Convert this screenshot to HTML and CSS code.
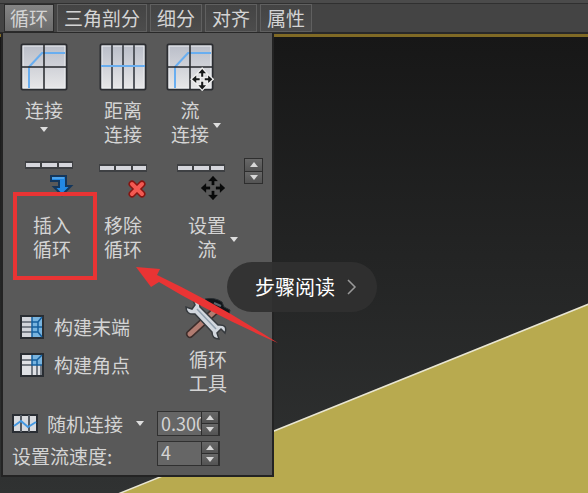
FILE: index.html
```html
<!DOCTYPE html>
<html lang="zh-CN">
<head>
<meta charset="utf-8">
<title>循环</title>
<link rel="stylesheet" href="styles.css">
</head>
<body>
<svg class="scene" viewBox="0 0 588 493" preserveAspectRatio="none" aria-hidden="true">
  <path d="M118 494 274 431 589 304V494z" fill="#b8aa4f"/>
  <path d="M118 494 274 431 589 304" fill="none" stroke="#e9e6d2" stroke-width="1.5"/>
</svg>
<nav class="tabs">
  <button class="tab active">循环</button>
  <button class="tab">三角剖分</button>
  <button class="tab">细分</button>
  <button class="tab">对齐</button>
  <button class="tab">属性</button>
</nav>
<main class="panel">
  <section class="row first">
    <button class="tool wide">
      <svg width="48" height="48" viewBox="0 0 48 48">
        <defs>
          <linearGradient id="tile" x2="0" y2="1"><stop stop-color="#b9bdc8"/><stop offset="1" stop-color="#e8e8e9"/></linearGradient>
          <g id="mesh"><rect x="1.500" y="1.500" width="45" height="45" rx="1" fill="url(#tile)" stroke="#2c2e32" stroke-width="2"/>
          <rect x="3" y="3" width="42" height="42" fill="none" stroke="#eef0f3" stroke-width="1"/>
          <path d="M9 45V24L22 10H45" fill="none" stroke="#69aef0" stroke-width="2"/>
          <path d="M24 2V46M2 24H46" stroke="#25272b" stroke-width="1.500"/></g>
          <g id="move"><path d="M12 0 16.500 5H13.200V9H10.800V5H7.500zM12 24 7.500 19H10.800V15H13.200V19H16.500zM0 12 5 7.500V10.800H9V13.200H5V16.500zM24 12 19 16.500V13.200H15V10.800H19V7.500z"/></g>
          <g id="bars"><path d="M0 0H48V8H0z" fill="#3e4043"/><path d="M1 2H15V6H1zM17 2H32V6H17zM34 2H47V6H34z" fill="#d5d6dc"/></g>
        </defs>
        <use href="#mesh"/>
      </svg>
      <span class="label">连接</span>
      <i class="caret"></i>
    </button>
    <button class="tool">
      <svg width="48" height="48" viewBox="0 0 48 48">
        <rect x="1.500" y="1.500" width="45" height="45" rx="1" fill="url(#tile)" stroke="#2c2e32" stroke-width="2"/>
        <rect x="3" y="3" width="42" height="42" fill="none" stroke="#eef0f3"/>
        <path d="M13 2V46M24 2V46M35 2V46" stroke="#555960" stroke-width="2"/>
        <path d="M2 23H46" stroke="#69aef0" stroke-width="2"/>
      </svg>
      <span class="label">距离<br>连接</span>
    </button>
    <button class="tool narrow">
      <svg width="48" height="48" viewBox="0 0 48 48">
        <use href="#mesh"/>
        <use href="#move" transform="translate(26 26) scale(.85)" stroke="#eee" stroke-width="3"/>
        <use href="#move" transform="translate(26 26) scale(.85)" fill="#17191a"/>
      </svg>
      <span class="label">流<br>连接</span>
    </button>
    <i class="caret side"></i>
  </section>

  <section class="row second">
    <button class="tool insert">
      <svg width="54" height="44" viewBox="0 0 54 44">
        <use href="#bars" y="4"/>
        <path d="M26 19H41V29H46L37 38 29 30H34V24H26z" fill="#2389e4" stroke="#14375c" stroke-width="2"/>
        <path d="M27 21H39" stroke="#75bdf5"/>
      </svg>
      <span class="label">插入<br>循环</span>
    </button>
    <button class="tool remove">
      <svg width="48" height="44" viewBox="0 0 48 44">
        <use href="#bars" y="7"/>
        <path d="M33 27 43 37M43 27 33 37" stroke="#871511" stroke-width="7" stroke-linecap="round"/>
        <path d="M33 27 43 37M43 27 33 37" stroke="#f35952" stroke-width="4" stroke-linecap="round"/>
      </svg>
      <span class="label">移除<br>循环</span>
    </button>
    <button class="tool flow">
      <svg width="60" height="44" viewBox="0 0 60 44">
        <use href="#bars" y="7"/>
        <use href="#move" transform="translate(24 19)" fill="#090a0a" stroke="#090a0a" stroke-width=".3"/>
      </svg>
      <span class="label">设置<br>流</span>
    </button>
    <i class="caret side"></i>
    <div class="spin">
      <button class="step" aria-label="增加流"><i class="up"></i></button>
      <button class="step" aria-label="减少流"><i class="down"></i></button>
    </div>
  </section>

  <section class="row third">
    <div class="builds">
      <button class="build">
        <svg width="24" height="24" viewBox="0 0 24 24">
          <rect x="1" y="1" width="22" height="22" fill="#d3d6dc" stroke="#292d32" stroke-width="2"/>
          <path d="M12 2H22V22H12z" fill="#78b4df"/>
          <path d="M2 7H12M2 12H12M2 17H12" stroke="#5d646d" stroke-width="1.500"/>
          <path d="M12 2V22M12 7H18V17H12M12 12H22M18 7 22 2M18 17 22 22" fill="none" stroke="#155f9f" stroke-width="1.500"/>
        </svg>
        <span>构建末端</span>
      </button>
      <button class="build">
        <svg width="24" height="24" viewBox="0 0 24 24">
          <rect x="1" y="1" width="22" height="22" fill="#dfe1e5" stroke="#292d32" stroke-width="2"/>
          <path d="M12 2H22V12H12z" fill="#78b4df"/>
          <path d="M2 7H12M2 12H12M12 12V22M17 12V22M21 12V22" stroke="#535a63" stroke-width="1.500"/>
          <path d="M12 2V12H22M12 7H17V12M17 7 22 2" fill="none" stroke="#155f9f" stroke-width="1.500"/>
        </svg>
        <span>构建角点</span>
      </button>
    </div>
    <button class="tool kit">
      <svg width="48" height="48" viewBox="0 0 48 48">
        <path d="M6 37 31 14" stroke="#3c2d2b" stroke-width="8" stroke-linecap="round"/>
        <path d="M6 37 31 14" stroke="#b17c71" stroke-width="5" stroke-linecap="round"/>
        <path d="M21 2Q31 0 38 5L40 10 46 13 45 18 40 17 31 14 28 9z" fill="#111519" stroke="#292e32" stroke-width="1"/>
        <path d="M30 6 37 9" stroke="#59646d" stroke-width="2"/>
        <path d="M9 3 11 8 8 12 2 10Q2 18 11 17L28 35Q28 42 35 42L33 36 37 32 41 36Q44 27 34 28L16 10Q16 3 9 3z" fill="#d2d7de" stroke="#363a3e" stroke-width="1.500"/>
        <path d="M13 12 32 32" stroke="#91a0ae" stroke-width="1.500"/>
      </svg>
      <span class="label">循环<br>工具</span>
    </button>
  </section>

  <section class="settings">
    <button class="random">
      <svg width="26" height="19" viewBox="0 0 26 19">
        <rect x="1" y="1" width="24" height="17" fill="#d8dade" stroke="#292d33" stroke-width="2"/>
        <path d="M9 1V18M17 1V18" stroke="#555b63" stroke-width="2"/>
        <path d="M2 12 9 7 16 13 24 8" fill="none" stroke="#4499e3" stroke-width="2"/>
      </svg>
      <span>随机连接</span><i class="caret"></i>
    </button>
    <div class="number">
      <input type="text" value="0.300" aria-label="随机连接">
      <div class="spin"><button class="step" aria-label="增加"><i class="up"></i></button><button class="step" aria-label="减少"><i class="down"></i></button></div>
    </div>
    <label for="speed">设置流速度:</label>
    <div class="number">
      <input id="speed" type="text" value="4">
      <div class="spin"><button class="step" aria-label="加快"><i class="up"></i></button><button class="step" aria-label="减慢"><i class="down"></i></button></div>
    </div>
  </section>
</main>
<div class="highlight"></div>
<svg class="pointer" width="142" height="78" viewBox="0 0 142 78" aria-hidden="true"><path d="M0 0 24 2 21 8Q80 36 142 76Q76 47 23 15L15 20z" fill="#e93434"/></svg>
<button class="reader"><span>步骤阅读</span><svg width="10" height="16" viewBox="0 0 10 16"><path d="M1 1 8 8 1 15" fill="none" stroke="#9a9a9a" stroke-width="1.500"/></svg></button>
</body>
</html>
```
FILE: styles.css
```css
* { box-sizing: border-box; }
body {
  position: relative;
  min-height: 100vh;
  margin: 0;
  overflow: hidden;
  background: linear-gradient(#171717 36px, #303232);
  color: #d4d4d4;
  font: 19px/24px "Noto Sans CJK SC", sans-serif;
}
button {
  margin: 0;
  padding: 0;
  border: 0;
  background: none;
  color: inherit;
  font: inherit;
}
svg { display: block; flex: none; }
.scene { position: absolute; inset: 0; width: 100%; height: 100%; }
.tabs {
  position: relative;
  display: flex;
  gap: 3px;
  height: 37px;
  padding: 4px 4px 5px;
  background: linear-gradient(#4b4b4b 3px, #303030 3px, #303030 4px, #444 4px, #444 32px, #292929 32px, #292929 34px, #806a25 34px);
}
.tab {
  height: 28px;
  padding: 0 6px;
  border: 1px solid #606060;
  background: linear-gradient(#444, #4c4c4c);
  line-height: 24px;
  white-space: nowrap;
}
.tab.active {
  padding: 0 5px;
  border: 1px solid #2b2b2b;
  background: linear-gradient(#858585, #6b6b6b);
}
.panel {
  position: relative;
  width: max-content;
  margin: -4px 0 0 1px;
  padding-bottom: 9px;
  border: 2px solid #232323;
  border-top: 0;
  background: #595959;
}
.row { display: flex; align-items: flex-start; }
.first { padding-top: 10px; height: 124px; }
.tool {
  display: flex;
  flex-direction: column;
  align-items: center;
  gap: 7px;
  width: 76px;
}
.wide { width: 82px; }
.narrow { width: 58px; }
.label { text-align: center; white-space: nowrap; }
.caret {
  width: 0;
  height: 0;
  border: 4px solid transparent;
  border-top: 5px solid #dedede;
  border-bottom: 0;
}
.wide .caret { margin-top: -2px; }
.caret.side { margin-top: 80px; margin-left: -6px; }
.second { height: 140px; }
.second .tool { gap: 12px; }
.second .insert { width: 98px; }
.second .remove { width: 44px; margin-right: 32px; }
.second .flow { width: 60px; }
.second .side { margin-left: -7px; }
.spin {
  display: grid;
  grid-template-rows: 1fr 1fr;
  gap: 1px;
  width: 19px;
  height: 26px;
  padding: 1px;
  background: #2e2e2e;
}
.second > .spin { margin: 1px 9px 0 6px; }
.step {
  display: grid;
  place-items: center;
  min-height: 0;
  background: linear-gradient(#686868, #535353);
}
.up, .down { border: 4px solid transparent; border-bottom: 5px solid #d8d8d8; border-top: 0; }
.down { border-top: 5px solid #d8d8d8; border-bottom: 0; }
.third { height: 114px; justify-content: space-between; }
.builds { display: grid; gap: 14px; padding: 18px 0 0 17px; }
.build { display: flex; align-items: center; gap: 10px; }
.kit { width: 82px; gap: 2px; margin-right: 23px; }
.settings {
  display: grid;
  grid-template-columns: 144px 63px;
  gap: 4px 1px;
  align-items: center;
  padding-left: 9px;
}
.random { display: flex; align-items: center; gap: 9px; }
.random .caret { margin-left: 4px; }
.settings label { padding-top: 6px; line-height: 20px; }
.number { display: flex; height: 25px; border: 1px solid #303030; background: #666; }
.number input {
  flex: 1;
  min-width: 0;
  padding: 0 0 2px 3px;
  border: 0;
  background: transparent;
  color: inherit;
  font: 18px/20px "Noto Sans CJK SC", sans-serif;
}
.number .spin { width: 18px; height: 100%; padding: 0 1px; }
.highlight {
  position: absolute;
  left: 13px;
  top: 192px;
  width: 84px;
  height: 88px;
  border: 4px solid #e93434;
}
.pointer { position: absolute; left: 136px; top: 267px; }
.reader {
  position: absolute;
  left: 227px;
  top: 262px;
  display: flex;
  align-items: center;
  gap: 12px;
  height: 50px;
  padding: 0 20px 0 28px;
  border-radius: 25px;
  background: rgba(48, 48, 48, .93);
  color: #fff;
  font-size: 20px;
}
```
